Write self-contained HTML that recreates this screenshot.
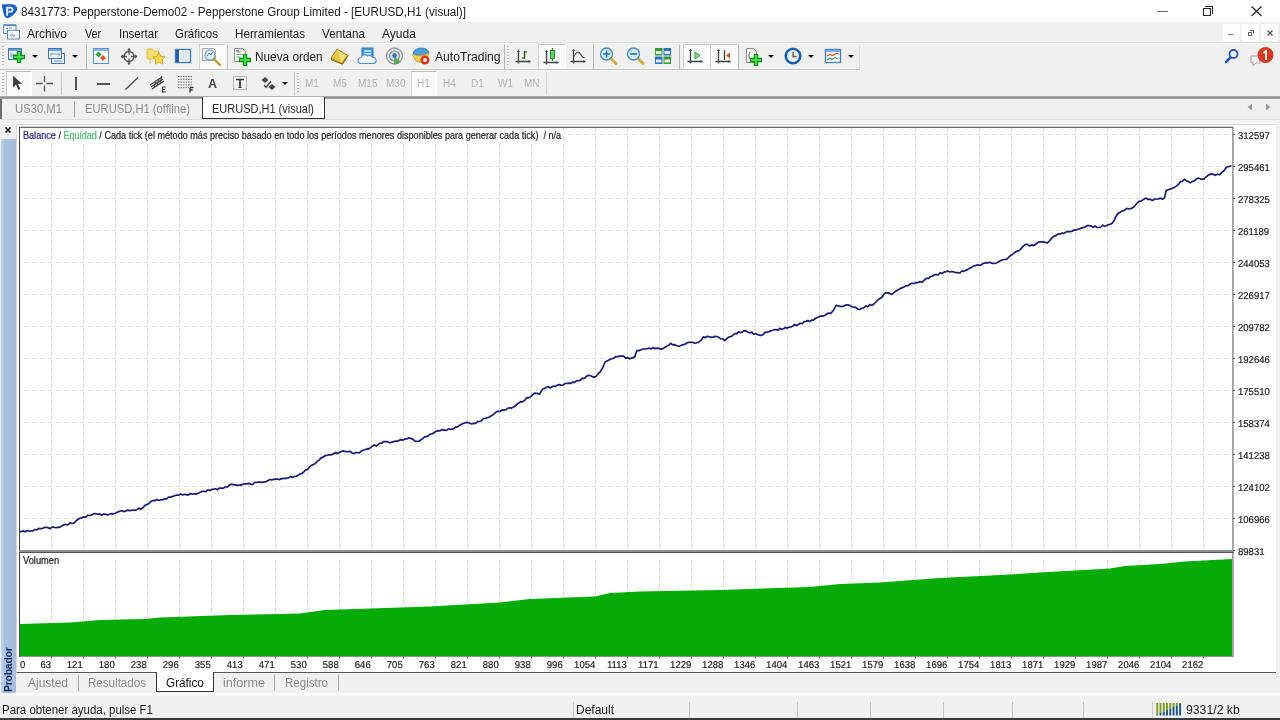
<!DOCTYPE html>
<html><head><meta charset="utf-8"><title>MT4</title>
<style>
*{box-sizing:border-box;margin:0;padding:0}
html,body{width:1280px;height:720px;overflow:hidden;background:#f0f0f0;font-family:"Liberation Sans",sans-serif;}
.a{position:absolute}
.t{position:absolute;white-space:pre;line-height:1;color:#1a1a1a;transform-origin:0 0}
svg{position:absolute;overflow:visible}
.vs{position:absolute;width:1px;background:#b8b8b8}
.btn{position:absolute;background:#fafafa;border-top:1px solid #bdbdbd;border-left:1px solid #d5d5d5;border-right:1px solid #fff}
.dd{position:absolute;width:0;height:0;border-left:3.500px solid transparent;border-right:3.500px solid transparent;border-top:3.500px solid #111}
.gr{color:#b4b4b4}
#w{position:absolute;left:0;top:0;width:1280px;height:720px;will-change:transform;background:#f0f0f0}
</style></head><body><div id="w">
<!-- title bar -->
<div class="a" style="left:0;top:0;width:1280px;height:22px;background:#fff"></div>
<svg style="left:1px;top:3px" width="17" height="17" viewBox="0 0 17 17"><path d="M2 1.300Q0.500 1.400 0.800 3L2.800 11.500Q4.300 15.600 7 15.200Q12 13.200 15.500 8.200Q17 5.200 15 2.800Q13.500 1.300 11 1.300Z" fill="#1c62c6"/><path d="M6.100 12.800V4.700H9.400Q11.500 4.700 11.500 6.700Q11.500 8.700 9.400 8.700H7.300" fill="none" stroke="#d9efff" stroke-width="1.900"/></svg>
<div class="t" style="left:21px;top:6px;font-size:12px;transform:scaleX(.974)">8431773: Pepperstone-Demo02 - Pepperstone Group Limited - [EURUSD,H1 (visual)]</div>
<div class="a" style="left:1157px;top:10.500px;width:11px;height:1px;background:#666"></div>
<div class="a" style="left:1203px;top:8px;width:8px;height:8px;border:1px solid #222"></div>
<div class="a" style="left:1205px;top:6px;width:8px;height:8px;border-top:1px solid #222;border-right:1px solid #222"></div>
<svg style="left:1250.500px;top:5.800px" width="11" height="11"><path d="M0.5 0.5 L10.5 10 M10.5 0.5 L0.5 10" stroke="#222" stroke-width="1.200"/></svg>
<!-- menu bar -->
<svg style="left:3px;top:24px" width="17" height="16" viewBox="0 0 17 16"><rect x=".7" y=".8" width="12.300" height="8.700" fill="#f7f9fc" stroke="#5f88b5"/><rect x=".7" y=".5" width="12.300" height="1.600" fill="#5f88b5"/><rect x="4.500" y="6.300" width="12" height="8.700" fill="#fbfcfe" stroke="#5f88b5"/><path d="M3 4.500h2M6 4h3M7 11l1.500 1.500 1-2 1.500 2 1-1.500" stroke="#6f8fb3" stroke-width="1" fill="none"/></svg>
<div class="t" style="left:27px;top:28px;font-size:12px">Archivo</div>
<div class="t" style="left:85px;top:28px;font-size:12px;transform:scaleX(.9)">Ver</div>
<div class="t" style="left:119px;top:28px;font-size:12px;transform:scaleX(.96)">Insertar</div>
<div class="t" style="left:175px;top:28px;font-size:12px;transform:scaleX(.96)">Gráficos</div>
<div class="t" style="left:235px;top:28px;font-size:12px;transform:scaleX(.972)">Herramientas</div>
<div class="t" style="left:322px;top:28px;font-size:12px;transform:scaleX(.976)">Ventana</div>
<div class="t" style="left:382px;top:28px;font-size:12px">Ayuda</div>
<!-- mdi controls -->
<div class="a" style="left:1223px;top:24px;width:17px;height:17px;background:#fdfdfd"></div>
<div class="a" style="left:1242px;top:24px;width:17px;height:17px;background:#fdfdfd"></div>
<div class="a" style="left:1261px;top:24px;width:17px;height:17px;background:#fdfdfd"></div>
<div class="a" style="left:1228px;top:34px;width:5px;height:1px;background:#777"></div>
<div class="a" style="left:1248px;top:32px;width:4px;height:4px;border:1px solid #666"></div>
<div class="a" style="left:1250px;top:30px;width:4px;height:4px;border-top:1px solid #666;border-right:1px solid #666"></div>
<svg style="left:1267px;top:30px" width="6" height="6"><path d="M0.5 0.5 L5.5 5.5 M5.5 0.5 L0.5 5.5" stroke="#555" stroke-width="1.3"/></svg>
<!-- toolbar lines -->
<div class="a" style="left:0;top:42px;width:1280px;height:1px;background:#dcdcdc"></div>
<div class="a" style="left:0;top:43px;width:1280px;height:1px;background:#fbfbfb"></div>
<div class="a" style="left:0;top:69px;width:860px;height:1px;background:#c4c4c4"></div>
<div class="a" style="left:0;top:70px;width:860px;height:1px;background:#fafafa"></div>
<div class="a" style="left:0;top:96px;width:1280px;height:3px;background:linear-gradient(#bdbdbd,#8c8c8c 50%,#a8a8a8)"></div>
<!-- toolbar 1 -->
<div class="a" style="left:2px;top:46px;width:2px;height:21px;background:repeating-linear-gradient(#bebebe 0 1px,transparent 1px 3px)"></div>
<!-- new chart -->
<svg style="left:7px;top:47px" width="20" height="18" viewBox="0 0 20 18"><rect x="1.5" y="1.5" width="13" height="11" fill="#e9f1fa" stroke="#4278ae"/><rect x="2" y="2" width="12" height="2" fill="#6fa0d6"/><path d="M4 5v5M4 8h5" stroke="#7a9cc0" stroke-width="1"/><path d="M12 4v12M6 10h12" stroke="#0e8a14" stroke-width="4.4"/><path d="M12 5v10M7 10h10" stroke="#3fdc45" stroke-width="2.2"/></svg>
<div class="dd" style="left:32px;top:55px"></div>
<!-- profiles -->
<svg style="left:47px;top:47px" width="20" height="18" viewBox="0 0 20 18"><rect x="4.5" y="6.5" width="13" height="10" fill="#e9f1fa" stroke="#4278ae"/><rect x="1.5" y="1.5" width="13" height="10" fill="#e9f1fa" stroke="#4278ae"/><rect x="2" y="2" width="12" height="2" fill="#6fa0d6"/><path d="M4 7h8M4 6v3M12 6v3M7 14h8" stroke="#7a9cc0" stroke-width="1"/></svg>
<div class="dd" style="left:72px;top:55px"></div>
<div class="vs" style="left:86px;top:45px;height:24px"></div>
<!-- market watch -->
<svg style="left:92px;top:47px" width="18" height="18" viewBox="0 0 18 18"><rect x="1.5" y="1.5" width="15" height="15" fill="#fafcfe" stroke="#5b90cb"/><rect x="2" y="2" width="14" height="2" fill="#8db5e2"/><path d="M6.5 4.5l3 3-3 3-3-3z" fill="#2ea23a"/><path d="M11 8l3 3-3 3-3-3z" fill="#e4572e"/></svg>
<!-- crosshair target -->
<svg style="left:120px;top:48px" width="18" height="18" viewBox="0 0 18 18"><circle cx="9" cy="8.5" r="5" fill="none" stroke="#555" stroke-width="1.5"/><path d="M9 0.5v6M9 10.5v6M1 8.5h6M11 8.5h6" stroke="#555" stroke-width="1.3"/><path d="M9 0l2 2.5h-4zM9 17l2-2.5h-4zM0.500 8.500l2.500-2v4zM17.500 8.500l-2.500-2v4z" fill="#555"/></svg>
<!-- folder star -->
<svg style="left:146px;top:47px" width="20" height="19" viewBox="0 0 20 19"><path d="M1 2h5l1.500 2h5v8h-11.500z" fill="#f6dc6a" stroke="#d6b53a" stroke-width=".8"/><path d="M4 12v5" stroke="#c9b46a" stroke-width="1"/><path d="M13 5.500l1.900 3.800 4.200.6-3 3 .7 4.200-3.800-2-3.800 2 .7-4.200-3-3 4.200-.6z" fill="#f7d84a" stroke="#c9a227" stroke-width=".9"/></svg>
<!-- data window -->
<svg style="left:174px;top:48px" width="18" height="16" viewBox="0 0 18 16"><rect x="1.500" y="1.500" width="15" height="13" fill="#f5f9fd" stroke="#3f7fc4" stroke-width="1.400"/><rect x="2" y="2" width="3" height="12" fill="#2c5f9e"/><path d="M6 5h9M6 8h9M6 11h9M9 3v11M12 3v11" stroke="#c3d6ec" stroke-width=".8"/></svg>
<!-- strategy tester (active) -->
<div class="btn" style="left:199px;top:44px;width:26px;height:25px"></div>
<svg style="left:201px;top:47px" width="22" height="20" viewBox="0 0 22 20"><path d="M1.500 1.500h11l2 2v10h-13z" fill="#f3f3f3" stroke="#a9a9a9"/><circle cx="9" cy="8" r="5" fill="#d9ecf8" fill-opacity=".85" stroke="#7fa8c9" stroke-width="1.300"/><path d="M6 9l2-3 2 2 1.500-3" stroke="#5a8bb5" fill="none"/><path d="M13 12l6 6" stroke="#c79a2e" stroke-width="2.400" stroke-linecap="round"/></svg>
<div class="vs" style="left:227px;top:45px;height:24px;background:#c8c8c8"></div>
<!-- new order -->
<svg style="left:233px;top:47px" width="20" height="20" viewBox="0 0 20 20"><path d="M1.500 1.500h8l3 3v10h-11z" fill="#fbfbfb" stroke="#8a8a8a"/><path d="M3.500 5h5M3.500 7.500h6M3.500 10h4" stroke="#6fae7a" stroke-width="1.200"/><rect x="3" y="3" width="3" height="1.500" fill="#888"/><path d="M12 7v12M6 13h12" stroke="#0e8a14" stroke-width="4.400"/><path d="M12 8v10M7 13h10" stroke="#3fdc45" stroke-width="2.200"/></svg>
<div class="t" style="left:255px;top:51px;font-size:12px;transform:scaleX(.985)">Nueva orden</div>
<!-- gold book -->
<svg style="left:330px;top:48px" width="19" height="17" viewBox="0 0 19 17"><path d="M7 1l11 6.500-6 8.500-11-6z" fill="#e7c64a" stroke="#a57f1c" stroke-width="1"/><path d="M7.500 2.500l8.500 5-4.500 6.500" fill="#f5e27a" stroke="none"/><path d="M1 10l1 2 10.500 4 5.500-8.500" fill="none" stroke="#8f6a13" stroke-width="1.200"/></svg>
<!-- cloud server -->
<svg style="left:358px;top:47px" width="19" height="18" viewBox="0 0 19 18"><rect x="4" y="1" width="11" height="10" fill="#3f9be0" stroke="#2a76b8"/><path d="M6 4h7M6 7h7" stroke="#d9efff" stroke-width="1.500"/><path d="M3 16.500a3 3 0 0 1 0-6 4 4 0 0 1 6.500-1.500 3.500 3.500 0 0 1 5 1.500 3 3 0 0 1 1 6z" fill="#f4f9ff" stroke="#5b8fd0" stroke-width="1.100"/></svg>
<!-- signal -->
<svg style="left:385px;top:47px" width="19" height="18" viewBox="0 0 19 18"><circle cx="9.500" cy="9" r="8" fill="#e8e8e8" stroke="#8f9aa0" stroke-width="1.300"/><circle cx="9.500" cy="9" r="5" fill="#d4dde2" stroke="#7f8f99" stroke-width="1.200"/><path d="M9.500 9l6 6a8 8 0 0 1-6.500 2z" fill="#4fa84a"/><circle cx="9.500" cy="8.500" r="2.200" fill="#2f6fb5"/></svg>
<!-- autotrading -->
<svg style="left:411px;top:47px" width="20" height="19" viewBox="0 0 20 19"><path d="M2 7q1-6 8-6 7 0 8 5l-8 3z" fill="#4d9fdc" stroke="#2d78b8" stroke-width=".8"/><path d="M1.500 7.500q8 3 16.500-1.500l-3 7q-5 4-10 1z" fill="#f2cf52" stroke="#c59a2a" stroke-width=".8"/><circle cx="14" cy="13" r="4.500" fill="#d9371e"/><circle cx="14" cy="13" r="2" fill="#ffe9e2"/></svg>
<div class="t" style="left:435px;top:51px;font-size:12px;transform:scaleX(1.010)">AutoTrading</div>
<div class="vs" style="left:504px;top:45px;height:24px"></div>
<div class="a" style="left:507px;top:46px;width:2px;height:21px;background:repeating-linear-gradient(#bebebe 0 1px,transparent 1px 3px)"></div>
<!-- bar chart -->
<svg style="left:515px;top:49px" width="16" height="15" viewBox="0 0 16 15"><path d="M3.500 0.500v14M0.500 12.500h15" stroke="#444" stroke-width="1.300"/><path d="M3.500 1l1.500 2h-3zM15.500 12.500l-2-1.500v3z" fill="#444"/><path d="M7 9h2.500V3h2.500" stroke="#3aa642" fill="none" stroke-width="1.400"/><path d="M9.500 2v8" stroke="#444" stroke-width="1.200"/></svg>
<!-- candles (active) -->
<div class="btn" style="left:538px;top:44px;width:28px;height:25px"></div>
<svg style="left:543px;top:48px" width="16" height="17" viewBox="0 0 16 17"><path d="M3.500 2.500v14M0.500 14.500h15" stroke="#444" stroke-width="1.300"/><path d="M3.500 2l1.500 2h-3zM15.500 14.500l-2-1.500v3z" fill="#444"/><path d="M9.500 0v13" stroke="#2b7f32" stroke-width="1.200"/><rect x="7.500" y="2.500" width="4" height="8" fill="#5fd364" stroke="#2b8f32"/></svg>
<!-- line chart -->
<svg style="left:570px;top:49px" width="16" height="15" viewBox="0 0 16 15"><path d="M3.500 0.500v14M0.500 12.500h15" stroke="#444" stroke-width="1.300"/><path d="M3.500 0l1.500 2h-3zM15.500 12.500l-2-1.500v3z" fill="#444"/><path d="M3.500 8q4-8 7-3t4 3" stroke="#555" fill="none" stroke-width="1.200"/></svg>
<div class="vs" style="left:593px;top:45px;height:24px"></div>
<!-- zoom in -->
<svg style="left:599px;top:47px" width="19" height="18" viewBox="0 0 19 18"><path d="M11 10.500l6 6" stroke="#d1ab3e" stroke-width="3" stroke-linecap="round"/><circle cx="7.500" cy="7" r="6" fill="#cfeaf9" stroke="#4d86b3" stroke-width="1.300"/><path d="M7.500 3.500v7M4 7h7" stroke="#2e6ea5" stroke-width="1.600"/></svg>
<!-- zoom out -->
<svg style="left:626px;top:47px" width="19" height="18" viewBox="0 0 19 18"><path d="M11 10.500l6 6" stroke="#d1ab3e" stroke-width="3" stroke-linecap="round"/><circle cx="7.500" cy="7" r="6" fill="#cfeaf9" stroke="#4d86b3" stroke-width="1.300"/><path d="M4 7h7" stroke="#2e6ea5" stroke-width="1.600"/></svg>
<!-- tile -->
<svg style="left:654px;top:47px" width="18" height="18" viewBox="0 0 18 18"><rect x="1" y="1" width="7.500" height="7.500" fill="#3c9a3a"/><rect x="9.500" y="1" width="7.500" height="7.500" fill="#2f6fc0"/><rect x="1" y="9.500" width="7.500" height="7.500" fill="#2f6fc0"/><rect x="9.500" y="9.500" width="7.500" height="7.500" fill="#3c9a3a"/><rect x="2" y="4" width="5.500" height="3" fill="#e6f5d8"/><rect x="10.500" y="4" width="5.500" height="3" fill="#e3eefc"/><rect x="2" y="12.500" width="5.500" height="3" fill="#e3eefc"/><rect x="10.500" y="12.500" width="5.500" height="3" fill="#e6f5d8"/></svg>
<div class="vs" style="left:679px;top:45px;height:24px"></div>
<!-- autoscroll (active) -->
<div class="btn" style="left:683px;top:44px;width:27px;height:25px"></div>
<svg style="left:687px;top:49px" width="16" height="15" viewBox="0 0 16 15"><path d="M3.500 0.500v14M0.500 12.500h15" stroke="#444" stroke-width="1.300"/><path d="M3.500 0l1.500 2h-3zM15.500 12.500l-2-1.500v3z" fill="#444"/><path d="M8 3l5 3.500-5 3.500z" fill="#7fd884" stroke="#3a9a42" stroke-width="1"/></svg>
<!-- chart shift (active) -->
<div class="btn" style="left:710px;top:44px;width:28px;height:25px"></div>
<svg style="left:715px;top:49px" width="16" height="15" viewBox="0 0 16 15"><path d="M3.500 0.500v14M0.500 12.500h15" stroke="#444" stroke-width="1.300"/><path d="M3.500 0l1.500 2h-3zM15.500 12.500l-2-1.500v3z" fill="#444"/><path d="M9.500 1v10" stroke="#444" stroke-width="1.300"/><path d="M11 6.500l4-3v6z" fill="#c8512e"/></svg>
<div class="vs" style="left:738px;top:45px;height:24px"></div>
<!-- indicators -->
<svg style="left:745px;top:47px" width="19" height="20" viewBox="0 0 19 20"><path d="M1.500 1.500h7l3 3v11h-10z" fill="#fbfbfb" stroke="#8a8a8a"/><path d="M5 5q-2 4 0 7" stroke="#777" fill="none" stroke-width="1.200"/><path d="M11 7v12M5 13h12" stroke="#0e8a14" stroke-width="4.400"/><path d="M11 8v10M6 13h10" stroke="#3fdc45" stroke-width="2.200"/></svg>
<div class="dd" style="left:768px;top:55px"></div>
<!-- clock -->
<svg style="left:784px;top:47px" width="18" height="18" viewBox="0 0 18 18"><circle cx="9" cy="9" r="7.300" fill="#e4f2fd" stroke="#1f5ea8" stroke-width="2.600"/><path d="M9 5v4.500h3.500" stroke="#8a4a2a" stroke-width="1.300" fill="none"/></svg>
<div class="dd" style="left:808px;top:55px"></div>
<!-- template -->
<svg style="left:824px;top:48px" width="18" height="16" viewBox="0 0 18 16"><rect x="1.500" y="1.500" width="15" height="13" fill="#f8fbfe" stroke="#4a86c5" stroke-width="1.400"/><rect x="2" y="2" width="14" height="2" fill="#7fb0e3"/><path d="M3 8l3-1.500 3 1 3-2 3 .5" stroke="#d8553a" fill="none" stroke-width="1.200"/><path d="M3 12l3-2 2 1.500 3-2 3 1.500" stroke="#4ca85a" fill="none" stroke-width="1.200"/></svg>
<div class="dd" style="left:848px;top:55px"></div>
<div class="vs" style="left:859px;top:45px;height:24px;background:#dadada"></div>
<!-- search + chat -->
<svg style="left:1224px;top:48px" width="16" height="16" viewBox="0 0 16 16"><path d="M2 14l5-5" stroke="#2b56b5" stroke-width="2.600" stroke-linecap="round"/><circle cx="9.500" cy="6" r="4" fill="#f6f9ff" stroke="#2b56b5" stroke-width="1.800"/></svg>
<svg style="left:1248px;top:45px" width="28" height="24" viewBox="0 0 28 24"><path d="M3 11h9v7h-4l-3 3v-3h-2z" fill="#f2f2f2" stroke="#a0a0a0"/><circle cx="17.500" cy="10" r="8" fill="#d63a22"/><path d="M15.500 8l2.500-2v9" stroke="#fff" stroke-width="1.700" fill="none"/></svg>
<!-- toolbar 2 -->
<div class="a" style="left:2px;top:73px;width:2px;height:21px;background:repeating-linear-gradient(#bebebe 0 1px,transparent 1px 3px)"></div>
<div class="btn" style="left:6px;top:71px;width:26px;height:25px"></div>
<svg style="left:12px;top:75px" width="11" height="16" viewBox="0 0 11 16"><path d="M1 0.500v12l3-2.800 2.300 5.300 2-1-2.300-5 4-.3z" fill="#444"/></svg>
<svg style="left:36px;top:76px" width="17" height="16" viewBox="0 0 17 16"><path d="M8.500 0v6M8.500 9.500v6M0 7.500h6.500M10.500 7.500h6.500" stroke="#555" stroke-width="1.300"/></svg>
<div class="vs" style="left:61px;top:72px;height:23px;background:#c4c4c4"></div>
<div class="a" style="left:75.300px;top:77px;width:1.400px;height:13px;background:#555"></div>
<div class="a" style="left:97px;top:83px;width:13px;height:1.500px;background:#555"></div>
<svg style="left:124px;top:76px" width="16" height="15"><path d="M1.500 13.500L14 1.500" stroke="#555" stroke-width="1.500"/></svg>
<!-- channel E -->
<svg style="left:149px;top:74px" width="19" height="19" viewBox="0 0 19 19"><path d="M1 11L13 3M3 15L15 7M2 13L14 5" stroke="#444" stroke-width="1.100"/><path d="M5 14l2-7M8 12l2-7M11 10l2-8" stroke="#444" stroke-width="1.100"/><path d="M13.500 13v5h3M13.500 15.500h2.500M13.500 13h3" stroke="#333" stroke-width="1.200" fill="none"/></svg>
<!-- fibo F -->
<svg style="left:177px;top:75px" width="18" height="18" viewBox="0 0 18 18"><path d="M1 1.500h14M1 4.300h14M1 7.100h14M1 9.900h14M1 12.700h11" stroke="#666" stroke-width="1" stroke-dasharray="1.500 1"/><path d="M13 12.500v5M13 12.500h3.500M13 15h2.500" stroke="#333" stroke-width="1.300" fill="none"/></svg>
<div class="t" style="left:208px;top:78px;font-size:12.500px;font-weight:bold;color:#444">A</div>
<!-- text label -->
<svg style="left:232px;top:75px" width="16" height="16" viewBox="0 0 16 16"><rect x="1.500" y="1.500" width="13" height="13" fill="#f4f4f4" stroke="#777" stroke-dasharray="1 1"/><path d="M4 4.500h8M8 4.500v8" stroke="#333" stroke-width="1.700"/><path d="M6.500 12.500h3" stroke="#333" stroke-width="1"/></svg>
<!-- arrows -->
<svg style="left:260px;top:76px" width="17" height="16" viewBox="0 0 17 16"><path d="M5 1l3.500 3-3.500 3-3.500-3z" fill="#444"/><path d="M12 8l3.500 3-3.500 3-3.500-3z" fill="#444"/><path d="M4 9l2 2.500 5-6" stroke="#444" stroke-width="1.400" fill="none"/></svg>
<div class="dd" style="left:282px;top:82px"></div>
<div class="vs" style="left:294px;top:72px;height:23px;background:#c8c8c8"></div>
<div class="a" style="left:297px;top:73px;width:2px;height:21px;background:repeating-linear-gradient(#b8b8b8 0 1px,transparent 1px 3px)"></div>
<div class="t gr" style="left:305px;top:79px;font-size:10px">M1</div>
<div class="t gr" style="left:333px;top:79px;font-size:10px">M5</div>
<div class="t gr" style="left:358px;top:79px;font-size:10px">M15</div>
<div class="t gr" style="left:386px;top:79px;font-size:10px">M30</div>
<div class="btn" style="left:411px;top:71px;width:26px;height:25px"></div>
<div class="t gr" style="left:417px;top:79px;font-size:10px">H1</div>
<div class="t gr" style="left:443px;top:79px;font-size:10px">H4</div>
<div class="t gr" style="left:471px;top:79px;font-size:10px">D1</div>
<div class="t gr" style="left:498px;top:79px;font-size:10px">W1</div>
<div class="t gr" style="left:524px;top:79px;font-size:10px">MN</div>
<div class="vs" style="left:546px;top:72px;height:23px;background:#cfcfcf"></div>
<!-- chart tabs -->
<div class="a" style="left:0;top:99px;width:2px;height:20px;background:#6e6e6e"></div>
<div class="t" style="left:15px;top:103px;font-size:12px;color:#8c8c8c;transform:scaleX(.94)">US30,M1</div>
<div class="vs" style="left:74px;top:101px;height:16px;background:#a0a0a0"></div>
<div class="t" style="left:85px;top:103px;font-size:12px;color:#8c8c8c;transform:scaleX(.933)">EURUSD,H1 (offline)</div>
<div class="a" style="left:202px;top:97px;width:123px;height:22px;background:#fff;border:1px solid #333;border-top:none"></div>
<div class="t" style="left:212px;top:103px;font-size:12px;color:#2a2a2a;transform:scaleX(.916)">EURUSD,H1 (visual)</div>
<svg style="left:1247px;top:103px" width="6" height="8"><path d="M5 0.500v7L0.500 4z" fill="#9a9a9a"/></svg>
<svg style="left:1265px;top:103px" width="6" height="8"><path d="M1 0.500v7L5.500 4z" fill="#9a9a9a"/></svg>
<div class="a" style="left:0;top:119px;width:1280px;height:1px;background:#dcdcdc"></div>
<div class="a" style="left:0;top:120px;width:1280px;height:4px;background:#f6f6f6"></div>
<!-- chart panel -->
<div class="a" style="left:16px;top:124px;width:1260px;height:549px;background:#fff;border-left:1px solid #d9d9d9;border-top:1px solid #d9d9d9;border-bottom:1px solid #5a5a5a"></div>
<div class="a" style="left:1px;top:139px;width:15px;height:554px;background:linear-gradient(90deg,#c4d5ec,#a9c1e1 25%,#a4bcdd 85%,#b0bccb)"></div>
<div class="t" style="left:3px;top:692px;font-size:11.500px;font-weight:bold;color:#132a5e;transform:rotate(-90deg) scaleX(.9);transform-origin:0 0;letter-spacing:-.2px">Probador</div>
<svg style="left:4px;top:126px" width="8" height="8"><path d="M1.500 1.500l5 5M6.500 1.500l-5 5" stroke="#111" stroke-width="1.700"/></svg>
<svg style="left:0;top:0" width="1280" height="720" viewBox="0 0 1280 720">
<path d="M51.5 127V550M51.5 559V656M83.5 127V550M83.5 559V656M115.5 127V550M115.5 559V656M147.5 127V550M147.5 559V656M179.5 127V550M179.5 559V656M211.5 127V550M211.5 559V656M243.5 127V550M243.5 559V656M275.5 127V550M275.5 559V656M307.5 127V550M307.5 559V656M339.5 127V550M339.5 559V656M371.5 127V550M371.5 559V656M403.5 127V550M403.5 559V656M435.5 127V550M435.5 559V656M467.5 127V550M467.5 559V656M499.5 127V550M499.5 559V656M531.5 127V550M531.5 559V656M563.5 127V550M563.5 559V656M595.5 127V550M595.5 559V656M627.5 127V550M627.5 559V656M659.5 127V550M659.5 559V656M691.5 127V550M691.5 559V656M723.5 127V550M723.5 559V656M755.5 127V550M755.5 559V656M787.5 127V550M787.5 559V656M819.5 127V550M819.5 559V656M851.5 127V550M851.5 559V656M883.5 127V550M883.5 559V656M915.5 127V550M915.5 559V656M947.5 127V550M947.5 559V656M979.5 127V550M979.5 559V656M1011.5 127V550M1011.5 559V656M1043.5 127V550M1043.5 559V656M1075.5 127V550M1075.5 559V656M1107.5 127V550M1107.5 559V656M1139.5 127V550M1139.5 559V656M1171.5 127V550M1171.5 559V656M1203.5 127V550M1203.5 559V656" stroke="#e9e9e9" stroke-width="1" stroke-dasharray="6 2" stroke-dashoffset="7" fill="none"/>
<path d="M51.5 127V550M51.5 559V656M83.5 127V550M83.5 559V656M115.5 127V550M115.5 559V656M147.5 127V550M147.5 559V656M179.5 127V550M179.5 559V656M211.5 127V550M211.5 559V656M243.5 127V550M243.5 559V656M275.5 127V550M275.5 559V656M307.5 127V550M307.5 559V656M339.5 127V550M339.5 559V656M371.5 127V550M371.5 559V656M403.5 127V550M403.5 559V656M435.5 127V550M435.5 559V656M467.5 127V550M467.5 559V656M499.5 127V550M499.5 559V656M531.5 127V550M531.5 559V656M563.5 127V550M563.5 559V656M595.5 127V550M595.5 559V656M627.5 127V550M627.5 559V656M659.5 127V550M659.5 559V656M691.5 127V550M691.5 559V656M723.5 127V550M723.5 559V656M755.5 127V550M755.5 559V656M787.5 127V550M787.5 559V656M819.5 127V550M819.5 559V656M851.5 127V550M851.5 559V656M883.5 127V550M883.5 559V656M915.5 127V550M915.5 559V656M947.5 127V550M947.5 559V656M979.5 127V550M979.5 559V656M1011.5 127V550M1011.5 559V656M1043.5 127V550M1043.5 559V656M1075.5 127V550M1075.5 559V656M1107.5 127V550M1107.5 559V656M1139.5 127V550M1139.5 559V656M1171.5 127V550M1171.5 559V656M1203.5 127V550M1203.5 559V656" stroke="#d6d6d6" stroke-width="1" stroke-dasharray="2 6" stroke-dashoffset="7" fill="none"/>
<path d="M20 134.5H1232M20 166.5H1232M20 198.5H1232M20 230.5H1232M20 262.5H1232M20 294.5H1232M20 326.5H1232M20 358.5H1232M20 390.5H1232M20 422.5H1232M20 454.5H1232M20 486.5H1232M20 518.5H1232" stroke="#e9e9e9" stroke-width="1" stroke-dasharray="6 2" stroke-dashoffset="4" fill="none"/>
<path d="M20 134.5H1232M20 166.5H1232M20 198.5H1232M20 230.5H1232M20 262.5H1232M20 294.5H1232M20 326.5H1232M20 358.5H1232M20 390.5H1232M20 422.5H1232M20 454.5H1232M20 486.5H1232M20 518.5H1232" stroke="#d6d6d6" stroke-width="1" stroke-dasharray="2 6" stroke-dashoffset="4" fill="none"/>
<rect x="20" y="127" width="543" height="16.500" fill="#fff"/>
<rect x="20" y="553.500" width="42" height="12" fill="#fff"/>
<path d="M20 656L20 624 70 622.5 100 620 145 619 160 617.5 230 615 300 613.5 325 610 430 606.5 500 602.5 530 599 595 596.5 610 593 640 591.5 720 590 810 587 840 584 880 582.5 940 578 1000 575 1040 572.5 1110 568.5 1125 566 1160 564 1185 561.5 1232 559 1232 656Z" fill="#05ab05"/>
<polyline points="19.7,531.9 21.6,531.4 23.4,530.9 25.3,531.8 27.2,530.5 29.1,531.3 30.9,530.8 32.8,530.9 34.8,529.5 36.8,529.9 38.7,528.4 40.7,528.7 42.7,528.3 44.6,527.4 46.4,527.3 48.3,527.9 50.2,528.6 52.1,527.1 53.9,527.2 55.8,527.7 57.8,527.3 59.7,527.3 61.7,525.9 63.6,524.9 65.6,524.4 67.8,525.0 70.0,522.8 72.2,523.4 74.2,523.0 76.1,520.7 78.1,519.3 80.0,518.2 82.0,517.8 83.9,516.8 85.8,517.2 87.7,515.3 89.5,515.5 91.4,515.0 93.3,513.9 95.2,513.5 97.4,514.2 99.5,513.8 101.7,515.2 103.6,514.1 105.5,514.2 107.5,514.9 109.4,514.2 111.3,513.7 113.2,513.9 115.4,513.2 117.6,512.1 119.8,511.3 121.7,510.7 123.6,511.6 125.6,511.2 127.5,510.1 129.4,510.6 131.3,510.3 133.2,510.0 135.1,510.3 137.0,509.6 138.9,508.3 140.8,509.3 142.7,508.0 144.8,505.6 146.8,504.5 148.8,503.6 150.9,501.4 152.9,500.4 154.9,500.7 156.8,499.5 158.8,500.5 160.8,499.8 162.8,499.7 164.7,498.8 166.7,498.8 168.7,497.1 170.7,497.2 172.6,496.4 174.6,495.8 176.6,495.0 178.5,495.2 180.5,493.9 182.6,495.0 184.6,494.3 186.6,494.9 188.7,494.8 190.6,493.5 192.5,494.3 194.4,493.8 196.4,494.1 198.3,493.3 200.2,492.2 202.1,491.4 204.0,491.3 205.9,491.6 207.8,489.9 209.7,490.5 211.6,489.6 213.6,489.2 215.5,488.7 217.4,489.8 219.3,488.2 221.2,488.1 223.1,488.3 225.3,487.0 227.5,486.8 229.7,485.0 231.6,484.1 233.4,484.7 235.3,484.8 237.2,485.4 239.1,485.1 240.9,485.1 242.8,484.3 244.8,483.7 246.7,483.8 248.7,483.4 250.7,484.3 252.7,484.3 254.6,482.5 256.6,482.3 258.6,482.2 260.5,482.1 262.5,482.4 264.4,481.9 266.2,481.6 268.1,480.5 270.0,479.5 271.9,479.9 273.7,479.3 275.6,479.1 277.5,479.0 279.4,479.6 281.3,478.9 283.1,478.4 285.0,478.4 286.9,478.3 288.8,477.8 290.7,476.3 292.5,477.4 294.4,476.5 296.3,476.1 298.2,475.3 300.0,473.9 301.9,473.5 303.8,471.9 305.6,469.9 307.5,469.6 309.4,467.0 311.3,465.6 313.1,464.5 315.0,463.7 317.1,461.4 319.1,460.1 321.1,457.9 323.2,457.1 325.2,455.5 327.3,455.3 329.3,454.6 331.4,454.8 333.4,453.9 335.4,452.5 337.3,453.6 339.3,452.4 341.3,451.5 343.1,450.9 344.9,451.3 346.7,451.6 348.5,451.7 350.3,451.4 352.1,453.0 353.9,453.4 355.7,452.5 357.5,452.6 359.3,452.8 361.2,451.1 363.1,450.2 365.1,449.7 367.0,448.7 368.9,448.9 370.8,447.3 372.6,445.9 374.5,444.9 376.3,446.1 378.1,444.6 380.0,443.1 381.8,443.2 383.7,441.5 385.5,441.7 387.4,441.7 389.3,442.6 391.2,442.3 393.2,441.9 395.1,441.0 397.0,441.4 398.9,440.6 400.8,439.6 402.8,440.2 404.7,439.1 406.6,439.0 408.5,437.9 410.6,438.4 412.8,439.1 415.0,441.1 417.1,441.4 419.0,441.2 420.9,439.8 422.7,438.6 424.6,436.8 426.5,436.7 428.3,435.8 430.1,434.0 432.0,433.9 433.9,432.8 435.7,431.4 437.5,430.7 439.4,430.9 441.2,430.1 443.0,429.6 444.8,430.1 446.6,430.3 448.4,428.8 450.2,429.4 452.0,429.1 453.8,428.7 455.6,427.1 457.4,427.0 459.4,425.4 461.5,424.3 463.6,423.2 465.6,422.7 467.7,422.3 469.7,423.3 471.8,424.0 473.8,423.4 475.7,423.3 477.6,421.7 479.6,421.3 481.5,420.7 483.4,418.5 485.3,418.5 487.2,417.8 489.0,417.3 490.9,416.0 492.8,414.9 494.7,413.3 496.5,411.7 498.4,411.3 500.2,411.3 502.0,409.9 503.9,410.2 505.7,410.0 507.5,408.3 509.3,407.8 511.2,408.3 513.0,407.3 514.8,406.3 516.8,404.3 518.7,402.9 520.7,401.7 522.7,401.9 524.6,400.4 526.6,397.7 528.6,397.8 530.6,396.8 532.5,394.8 534.5,393.2 537.0,393.4 539.5,394.2 542.7,388.9 544.6,388.5 546.4,387.2 548.2,386.5 550.1,387.9 552.0,386.8 553.8,386.0 555.6,386.4 557.5,385.0 559.4,384.6 561.2,385.3 563.1,385.0 565.0,383.5 566.9,383.4 568.7,383.2 570.6,383.4 572.6,382.2 574.6,382.3 576.5,380.9 578.5,380.6 580.5,380.1 582.5,378.1 584.6,378.5 586.7,376.1 588.7,375.2 590.5,375.7 592.4,376.6 594.2,377.1 596.2,376.2 598.2,373.5 600.2,371.9 602.7,367.8 605.1,362.0 607.5,360.7 610.0,359.4 612.0,358.8 613.9,358.1 615.9,356.5 617.8,356.6 619.8,356.1 621.8,356.0 623.8,356.2 625.7,358.3 627.7,357.6 629.7,358.8 632.2,357.9 634.6,357.1 636.9,350.5 639.0,350.6 641.1,349.8 643.1,349.0 645.2,349.0 647.3,348.7 649.4,348.2 651.3,348.9 653.1,347.6 655.0,348.6 656.9,348.1 658.8,348.3 660.6,349.3 662.5,348.9 664.5,347.5 666.6,346.2 668.7,345.2 670.7,343.3 672.8,344.9 674.8,344.7 676.9,345.8 678.9,346.3 680.9,345.5 682.9,344.7 684.8,344.3 686.8,343.0 688.8,342.3 690.8,342.4 692.7,342.3 694.7,343.2 696.6,342.7 698.6,342.3 701.0,340.3 703.5,336.8 705.4,337.6 707.3,336.2 709.2,336.7 711.2,337.4 713.1,337.1 715.0,336.4 717.0,336.5 718.9,337.4 720.9,338.9 722.8,339.0 724.8,340.7 726.8,338.7 728.8,337.0 730.7,336.7 732.7,335.5 734.7,333.5 736.6,333.9 738.5,331.9 740.5,332.6 742.4,332.1 744.3,330.6 746.2,330.9 748.1,332.3 749.9,333.0 751.8,332.1 753.7,334.2 755.6,333.7 757.4,334.5 759.3,335.1 761.2,335.4 763.1,334.4 765.0,332.3 767.0,332.2 768.9,331.6 770.8,330.9 772.6,330.3 774.4,329.7 776.3,329.6 778.1,330.1 779.9,328.4 781.7,329.2 783.6,328.7 785.4,327.5 787.2,328.2 789.1,327.1 790.9,327.0 792.8,326.1 794.7,324.5 796.6,325.6 798.4,324.5 800.3,323.2 802.2,323.7 804.1,321.6 806.0,321.4 807.8,320.6 809.7,321.6 811.6,320.2 813.5,320.2 815.9,318.0 818.2,317.2 820.6,315.9 822.7,316.2 824.7,315.5 826.8,313.9 828.8,313.1 830.9,313.3 833.5,310.2 836.1,305.4 838.4,305.9 840.7,306.5 843.0,306.4 845.3,305.2 847.5,304.8 849.8,305.4 851.8,306.7 853.8,307.2 855.7,307.4 857.7,309.2 859.7,309.4 861.8,308.2 863.8,307.9 865.8,305.8 867.8,306.7 869.9,304.4 871.9,305.4 873.9,304.0 875.9,302.0 877.9,299.9 879.9,298.5 881.9,297.3 883.9,294.1 885.9,292.7 888.5,292.8 891.1,294.4 893.0,293.4 894.9,291.8 896.8,290.5 898.7,289.6 900.5,288.4 902.4,287.6 904.3,286.8 906.2,285.8 908.1,285.6 910.0,284.1 912.0,283.4 914.0,283.5 916.0,282.6 918.0,282.6 920.0,281.6 922.0,282.3 924.1,280.4 926.3,278.4 928.5,278.4 930.6,276.5 932.5,276.0 934.4,274.7 936.3,274.6 938.2,274.9 940.2,272.7 942.1,273.5 944.0,272.1 945.9,271.6 947.8,271.0 949.9,272.0 951.9,271.5 954.0,272.0 956.0,272.7 958.1,272.7 960.0,273.0 961.8,271.0 963.7,271.3 965.6,270.4 967.5,269.6 969.3,268.4 971.2,267.6 973.1,266.4 975.0,265.8 976.8,265.0 978.7,265.2 980.9,265.1 983.0,263.5 985.1,262.7 987.3,262.8 989.9,262.3 992.5,263.4 994.5,263.5 996.4,263.0 998.4,262.0 1000.4,260.6 1002.4,260.0 1004.3,259.5 1006.3,259.3 1008.4,257.6 1010.4,255.5 1012.5,254.5 1014.5,252.5 1016.6,251.4 1018.8,250.6 1020.9,248.9 1023.1,246.3 1025.2,244.5 1027.3,244.3 1029.5,246.0 1031.7,244.9 1033.8,245.6 1036.1,244.0 1038.3,242.1 1040.6,241.8 1042.9,241.9 1045.2,242.4 1047.5,242.8 1049.8,240.5 1052.1,237.6 1054.4,235.9 1056.3,235.4 1058.2,233.9 1060.1,234.0 1062.0,233.1 1064.0,233.3 1065.9,232.1 1067.8,231.5 1069.7,231.6 1071.6,231.5 1073.5,230.2 1075.4,230.2 1077.4,229.3 1079.3,229.1 1081.2,228.1 1083.2,227.5 1085.1,227.1 1087.0,225.6 1089.0,225.7 1091.0,225.8 1093.0,227.4 1095.1,226.0 1097.1,227.5 1099.1,227.3 1101.0,227.0 1102.8,225.2 1104.7,226.2 1106.5,225.7 1108.4,224.6 1110.2,224.3 1112.1,223.2 1114.1,220.6 1116.0,216.1 1118.0,213.6 1120.2,212.3 1122.3,211.0 1124.4,210.4 1126.6,208.4 1129.2,209.0 1131.7,208.4 1134.0,206.8 1136.3,204.0 1138.6,201.6 1140.9,201.2 1143.2,199.6 1145.5,198.1 1147.8,199.3 1150.1,199.2 1152.4,200.5 1154.4,199.2 1156.4,199.0 1158.4,199.0 1160.4,198.1 1162.4,199.2 1164.4,198.1 1166.1,190.6 1168.2,189.8 1170.2,189.1 1172.3,188.2 1174.3,187.4 1176.4,186.1 1178.4,184.4 1180.3,181.7 1182.3,181.5 1184.3,179.2 1186.3,180.9 1188.2,181.5 1190.2,182.7 1192.3,181.6 1194.5,180.8 1196.7,178.5 1198.8,178.2 1201.3,179.2 1203.9,179.2 1206.5,176.5 1209.1,174.8 1211.2,173.9 1213.2,174.3 1215.3,175.3 1217.3,174.2 1219.4,174.8 1221.7,172.7 1224.0,170.7 1226.3,167.2 1228.8,166.5 1231.4,165.8" fill="none" stroke="#1b1b70" stroke-width="1.700" stroke-linejoin="round"/>
<path d="M19.5 127V657M19 127.300H1233" stroke="#454545" stroke-width="1" fill="none"/><path d="M19 656.600H1233" stroke="#5c6a5c" stroke-width=".8" fill="none"/>
<path d="M1232.900 127V657" stroke="#858585" stroke-width="1.400" fill="none"/>
<rect x="19" y="550" width="1214.500" height="2" fill="#909090"/><rect x="19" y="552" width="1214.500" height="1" fill="#555"/>
<path d="M1233 134.5h2M1233 166.5h2M1233 198.5h2M1233 230.5h2M1233 262.5h2M1233 294.5h2M1233 326.5h2M1233 358.5h2M1233 390.5h2M1233 422.5h2M1233 454.5h2M1233 486.5h2M1233 518.5h2M1233 550.5h2M51.5 656.500v2M83.5 656.500v2M115.5 656.500v2M147.5 656.500v2M179.5 656.500v2M211.5 656.500v2M243.5 656.500v2M275.5 656.500v2M307.5 656.500v2M339.5 656.500v2M371.5 656.500v2M403.5 656.500v2M435.5 656.500v2M467.5 656.500v2M499.5 656.500v2M531.5 656.500v2M563.5 656.500v2M595.5 656.500v2M627.5 656.500v2M659.5 656.500v2M691.5 656.500v2M723.5 656.500v2M755.5 656.500v2M787.5 656.500v2M819.5 656.500v2M851.5 656.500v2M883.5 656.500v2M915.5 656.500v2M947.5 656.500v2M979.5 656.500v2M1011.5 656.500v2M1043.5 656.500v2M1075.5 656.500v2M1107.5 656.500v2M1139.5 656.500v2M1171.5 656.500v2M1203.5 656.500v2" stroke="#555" stroke-width="1" fill="none"/>
</svg>
<div class="t" style="left:1237.600px;top:132px;font-size:10px;text-rendering:geometricPrecision;-webkit-text-stroke:.2px;transform:scaleX(.955)">312597</div>
<div class="t" style="left:1237.600px;top:164px;font-size:10px;text-rendering:geometricPrecision;-webkit-text-stroke:.2px;transform:scaleX(.955)">295461</div>
<div class="t" style="left:1237.600px;top:196px;font-size:10px;text-rendering:geometricPrecision;-webkit-text-stroke:.2px;transform:scaleX(.955)">278325</div>
<div class="t" style="left:1237.600px;top:228px;font-size:10px;text-rendering:geometricPrecision;-webkit-text-stroke:.2px;transform:scaleX(.955)">261189</div>
<div class="t" style="left:1237.600px;top:260px;font-size:10px;text-rendering:geometricPrecision;-webkit-text-stroke:.2px;transform:scaleX(.955)">244053</div>
<div class="t" style="left:1237.600px;top:292px;font-size:10px;text-rendering:geometricPrecision;-webkit-text-stroke:.2px;transform:scaleX(.955)">226917</div>
<div class="t" style="left:1237.600px;top:324px;font-size:10px;text-rendering:geometricPrecision;-webkit-text-stroke:.2px;transform:scaleX(.955)">209782</div>
<div class="t" style="left:1237.600px;top:356px;font-size:10px;text-rendering:geometricPrecision;-webkit-text-stroke:.2px;transform:scaleX(.955)">192646</div>
<div class="t" style="left:1237.600px;top:388px;font-size:10px;text-rendering:geometricPrecision;-webkit-text-stroke:.2px;transform:scaleX(.955)">175510</div>
<div class="t" style="left:1237.600px;top:420px;font-size:10px;text-rendering:geometricPrecision;-webkit-text-stroke:.2px;transform:scaleX(.955)">158374</div>
<div class="t" style="left:1237.600px;top:452px;font-size:10px;text-rendering:geometricPrecision;-webkit-text-stroke:.2px;transform:scaleX(.955)">141238</div>
<div class="t" style="left:1237.600px;top:484px;font-size:10px;text-rendering:geometricPrecision;-webkit-text-stroke:.2px;transform:scaleX(.955)">124102</div>
<div class="t" style="left:1237.600px;top:516px;font-size:10px;text-rendering:geometricPrecision;-webkit-text-stroke:.2px;transform:scaleX(.955)">106966</div>
<div class="t" style="left:1237.600px;top:548px;font-size:10px;text-rendering:geometricPrecision;-webkit-text-stroke:.2px;transform:scaleX(.955)">89831</div>
<div class="t" style="left:19.700px;top:660.600px;font-size:10px;text-rendering:geometricPrecision;-webkit-text-stroke:.2px;transform:scaleX(.95)">0</div>
<div class="t" style="right:1229px;top:660.600px;font-size:10px;text-rendering:geometricPrecision;-webkit-text-stroke:.2px;transform:scaleX(.95);transform-origin:100% 0">63</div>
<div class="t" style="right:1197px;top:660.600px;font-size:10px;text-rendering:geometricPrecision;-webkit-text-stroke:.2px;transform:scaleX(.95);transform-origin:100% 0">121</div>
<div class="t" style="right:1165px;top:660.600px;font-size:10px;text-rendering:geometricPrecision;-webkit-text-stroke:.2px;transform:scaleX(.95);transform-origin:100% 0">180</div>
<div class="t" style="right:1133px;top:660.600px;font-size:10px;text-rendering:geometricPrecision;-webkit-text-stroke:.2px;transform:scaleX(.95);transform-origin:100% 0">238</div>
<div class="t" style="right:1101px;top:660.600px;font-size:10px;text-rendering:geometricPrecision;-webkit-text-stroke:.2px;transform:scaleX(.95);transform-origin:100% 0">296</div>
<div class="t" style="right:1069px;top:660.600px;font-size:10px;text-rendering:geometricPrecision;-webkit-text-stroke:.2px;transform:scaleX(.95);transform-origin:100% 0">355</div>
<div class="t" style="right:1037px;top:660.600px;font-size:10px;text-rendering:geometricPrecision;-webkit-text-stroke:.2px;transform:scaleX(.95);transform-origin:100% 0">413</div>
<div class="t" style="right:1005px;top:660.600px;font-size:10px;text-rendering:geometricPrecision;-webkit-text-stroke:.2px;transform:scaleX(.95);transform-origin:100% 0">471</div>
<div class="t" style="right:973px;top:660.600px;font-size:10px;text-rendering:geometricPrecision;-webkit-text-stroke:.2px;transform:scaleX(.95);transform-origin:100% 0">530</div>
<div class="t" style="right:941px;top:660.600px;font-size:10px;text-rendering:geometricPrecision;-webkit-text-stroke:.2px;transform:scaleX(.95);transform-origin:100% 0">588</div>
<div class="t" style="right:909px;top:660.600px;font-size:10px;text-rendering:geometricPrecision;-webkit-text-stroke:.2px;transform:scaleX(.95);transform-origin:100% 0">646</div>
<div class="t" style="right:877px;top:660.600px;font-size:10px;text-rendering:geometricPrecision;-webkit-text-stroke:.2px;transform:scaleX(.95);transform-origin:100% 0">705</div>
<div class="t" style="right:845px;top:660.600px;font-size:10px;text-rendering:geometricPrecision;-webkit-text-stroke:.2px;transform:scaleX(.95);transform-origin:100% 0">763</div>
<div class="t" style="right:813px;top:660.600px;font-size:10px;text-rendering:geometricPrecision;-webkit-text-stroke:.2px;transform:scaleX(.95);transform-origin:100% 0">821</div>
<div class="t" style="right:781px;top:660.600px;font-size:10px;text-rendering:geometricPrecision;-webkit-text-stroke:.2px;transform:scaleX(.95);transform-origin:100% 0">880</div>
<div class="t" style="right:749px;top:660.600px;font-size:10px;text-rendering:geometricPrecision;-webkit-text-stroke:.2px;transform:scaleX(.95);transform-origin:100% 0">938</div>
<div class="t" style="right:717px;top:660.600px;font-size:10px;text-rendering:geometricPrecision;-webkit-text-stroke:.2px;transform:scaleX(.95);transform-origin:100% 0">996</div>
<div class="t" style="right:685px;top:660.600px;font-size:10px;text-rendering:geometricPrecision;-webkit-text-stroke:.2px;transform:scaleX(.95);transform-origin:100% 0">1054</div>
<div class="t" style="right:653px;top:660.600px;font-size:10px;text-rendering:geometricPrecision;-webkit-text-stroke:.2px;transform:scaleX(.95);transform-origin:100% 0">1113</div>
<div class="t" style="right:621px;top:660.600px;font-size:10px;text-rendering:geometricPrecision;-webkit-text-stroke:.2px;transform:scaleX(.95);transform-origin:100% 0">1171</div>
<div class="t" style="right:589px;top:660.600px;font-size:10px;text-rendering:geometricPrecision;-webkit-text-stroke:.2px;transform:scaleX(.95);transform-origin:100% 0">1229</div>
<div class="t" style="right:557px;top:660.600px;font-size:10px;text-rendering:geometricPrecision;-webkit-text-stroke:.2px;transform:scaleX(.95);transform-origin:100% 0">1288</div>
<div class="t" style="right:525px;top:660.600px;font-size:10px;text-rendering:geometricPrecision;-webkit-text-stroke:.2px;transform:scaleX(.95);transform-origin:100% 0">1346</div>
<div class="t" style="right:493px;top:660.600px;font-size:10px;text-rendering:geometricPrecision;-webkit-text-stroke:.2px;transform:scaleX(.95);transform-origin:100% 0">1404</div>
<div class="t" style="right:461px;top:660.600px;font-size:10px;text-rendering:geometricPrecision;-webkit-text-stroke:.2px;transform:scaleX(.95);transform-origin:100% 0">1463</div>
<div class="t" style="right:429px;top:660.600px;font-size:10px;text-rendering:geometricPrecision;-webkit-text-stroke:.2px;transform:scaleX(.95);transform-origin:100% 0">1521</div>
<div class="t" style="right:397px;top:660.600px;font-size:10px;text-rendering:geometricPrecision;-webkit-text-stroke:.2px;transform:scaleX(.95);transform-origin:100% 0">1579</div>
<div class="t" style="right:365px;top:660.600px;font-size:10px;text-rendering:geometricPrecision;-webkit-text-stroke:.2px;transform:scaleX(.95);transform-origin:100% 0">1638</div>
<div class="t" style="right:333px;top:660.600px;font-size:10px;text-rendering:geometricPrecision;-webkit-text-stroke:.2px;transform:scaleX(.95);transform-origin:100% 0">1696</div>
<div class="t" style="right:301px;top:660.600px;font-size:10px;text-rendering:geometricPrecision;-webkit-text-stroke:.2px;transform:scaleX(.95);transform-origin:100% 0">1754</div>
<div class="t" style="right:269px;top:660.600px;font-size:10px;text-rendering:geometricPrecision;-webkit-text-stroke:.2px;transform:scaleX(.95);transform-origin:100% 0">1813</div>
<div class="t" style="right:237px;top:660.600px;font-size:10px;text-rendering:geometricPrecision;-webkit-text-stroke:.2px;transform:scaleX(.95);transform-origin:100% 0">1871</div>
<div class="t" style="right:205px;top:660.600px;font-size:10px;text-rendering:geometricPrecision;-webkit-text-stroke:.2px;transform:scaleX(.95);transform-origin:100% 0">1929</div>
<div class="t" style="right:173px;top:660.600px;font-size:10px;text-rendering:geometricPrecision;-webkit-text-stroke:.2px;transform:scaleX(.95);transform-origin:100% 0">1987</div>
<div class="t" style="right:141px;top:660.600px;font-size:10px;text-rendering:geometricPrecision;-webkit-text-stroke:.2px;transform:scaleX(.95);transform-origin:100% 0">2046</div>
<div class="t" style="right:109px;top:660.600px;font-size:10px;text-rendering:geometricPrecision;-webkit-text-stroke:.2px;transform:scaleX(.95);transform-origin:100% 0">2104</div>
<div class="t" style="right:77px;top:660.600px;font-size:10px;text-rendering:geometricPrecision;-webkit-text-stroke:.2px;transform:scaleX(.95);transform-origin:100% 0">2162</div>
<div class="t" style="left:23px;top:130.500px;font-size:10px;transform:scaleX(.909);-webkit-text-stroke:.2px"><span style="color:#22227a">Balance</span> / <span style="color:#4fb86a">Equidad</span> / Cada tick (el método más preciso basado en todo los períodos menores disponibles para generar cada tick)  / n/a</div>
<div class="t" style="left:23px;top:555.500px;font-size:10px;transform:scaleX(.93);-webkit-text-stroke:.2px">Volumen</div>
<!-- tester tabs -->
<div class="t" style="left:28px;top:677px;font-size:12px;color:#8a8a8a">Ajusted</div>
<div class="vs" style="left:78px;top:675px;height:16px;background:#a6a6a6"></div>
<div class="t" style="left:88px;top:677px;font-size:12px;color:#8a8a8a;transform:scaleX(.966)">Resultados</div>
<div class="a" style="left:156px;top:672px;width:58px;height:20px;background:#fff;border:1px solid #333;border-top:none"></div>
<div class="t" style="left:166px;top:677px;font-size:12px;color:#111;transform:scaleX(.98)">Gráfico</div>
<div class="t" style="left:223px;top:677px;font-size:12px;color:#8a8a8a;transform:scaleX(1.050)">informe</div>
<div class="vs" style="left:274px;top:675px;height:16px;background:#a6a6a6"></div>
<div class="t" style="left:285px;top:677px;font-size:12px;color:#8a8a8a;transform:scaleX(.962)">Registro</div>
<div class="vs" style="left:338px;top:675px;height:16px;background:#a6a6a6"></div>
<!-- status bar -->
<div class="a" style="left:0;top:693.400px;width:1280px;height:3px;background:#f9f9f9"></div>

<div class="t" style="left:2px;top:704px;font-size:12px;transform:scaleX(.955)">Para obtener ayuda, pulse F1</div>
<div class="t" style="left:576px;top:704px;font-size:12px">Default</div>
<div class="vs" style="left:573px;top:702px;height:16px;background:#c8c8c8"></div>
<div class="vs" style="left:689px;top:702px;height:16px;background:#c8c8c8"></div>
<div class="vs" style="left:797px;top:702px;height:16px;background:#c8c8c8"></div>
<div class="vs" style="left:870px;top:702px;height:16px;background:#c8c8c8"></div>
<div class="vs" style="left:943px;top:702px;height:16px;background:#c8c8c8"></div>
<div class="vs" style="left:1012px;top:702px;height:16px;background:#c8c8c8"></div>
<div class="vs" style="left:1083px;top:702px;height:16px;background:#c8c8c8"></div>
<div class="vs" style="left:1152px;top:702px;height:16px;background:#c8c8c8"></div>
<svg style="left:1156px;top:702px" width="27" height="15" viewBox="0 0 27 15"><path d="M1.20 1v11.60M4.47 1v10.10M7.74 1v8.60M11.01 1v7.10M14.28 1v5.60M17.55 1v4.10M20.82 1v2.60M24.09 1v1.10" stroke="#7d9c1e" stroke-width="1.900"/><path d="M1.20 12.60v1.00M4.47 11.10v2.50M7.74 9.60v4.00M11.01 8.10v5.50M14.28 6.60v7.00M17.55 5.10v8.50M20.82 3.60v10.00M24.09 2.10v11.50" stroke="#1f5585" stroke-width="1.900"/></svg>
<div class="t" style="left:1186px;top:704px;font-size:12px;transform:scaleX(1.020)">9331/2 kb</div>
<div class="a" style="left:0;top:718px;width:1280px;height:2px;background:#3a3a3a"></div>
</div></body></html>
